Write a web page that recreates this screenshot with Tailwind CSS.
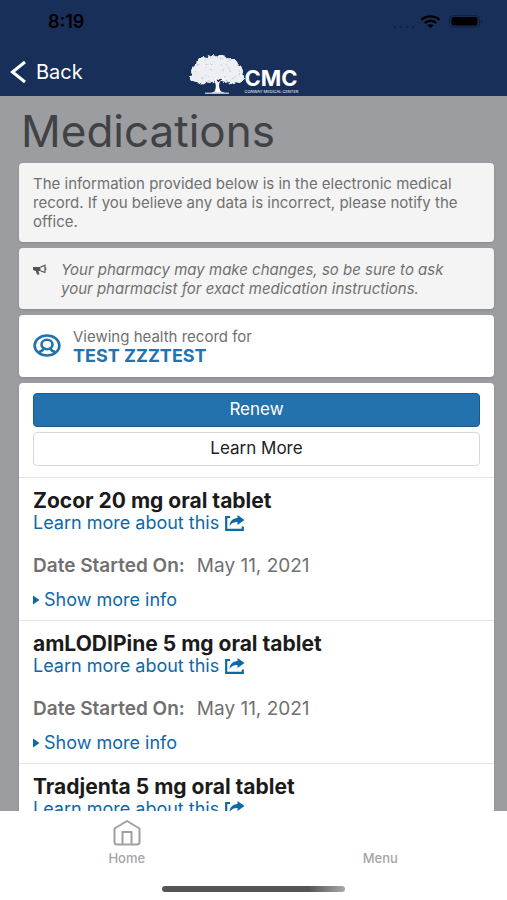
<!DOCTYPE html>
<html lang="en">
<head>
<meta charset="utf-8">
<meta name="viewport" content="width=device-width, initial-scale=1">
<title>Medications</title>
<script src="https://cdn.jsdelivr.net/npm/@tailwindcss/browser@4"></script>
</head>
<body class="flex h-screen flex-col overflow-hidden bg-[#9c9da1] font-['Inter','Liberation_Sans',sans-serif] text-[#707070]">
<svg class="absolute h-0 w-0" aria-hidden="true">
  <symbol id="share" viewBox="0 0 20 16"><path d="M5 2H1.200v12.800h16.600V11.500" fill="none" stroke="currentColor" stroke-width="2.200"/><path d="M12.500 0 19.500 5l-7 5V7C9 6.800 6.500 8 4.500 11 4.800 6 8 3.200 12.500 3z" fill="currentColor"/></symbol>
  <filter id="leaves" x="-10%" y="-10%" width="120%" height="120%">
    <feTurbulence type="fractalNoise" baseFrequency=".3" numOctaves="2" seed="4" result="n"/>
    <feDisplacementMap in="SourceGraphic" in2="n" scale="4" xChannelSelector="R" yChannelSelector="G"/>
  </filter>
</svg>

<header class="h-24 shrink-0 bg-[#182f59]">
  <div class="flex h-11 items-center justify-between pr-6 pl-12 text-black">
    <time class="text-lg font-semibold">8:19</time>
    <div class="flex items-center gap-1.5">
      <svg class="h-5 w-[52px]" viewBox="0 0 52 20" aria-label="Wi-Fi" role="img">
        <g fill="#10234a"><circle cx="4" cy="15" r="1.300"/><circle cx="10" cy="15" r="1.300"/><circle cx="16" cy="15" r="1.300"/><circle cx="22" cy="15" r="1.300"/></g>
        <g transform="translate(-3 0)"><g fill="none" stroke="#000" stroke-width="2.300"><path d="M33.500 7.800c5-4.600 13-4.600 18 0"/><path d="M36.700 11c3.300-3 8.300-3 11.600 0"/></g>
        <path d="M39.300 13.300c1.800-1.400 4.600-1.400 6.400 0L42.500 16z"/></g>
      </svg>
      <svg class="h-5 w-[34px]" viewBox="0 0 34 20" aria-label="Battery full" role="img">
        <rect x=".5" y="3.500" width="30" height="11.500" rx="3.500" fill="none" stroke="#0f1f3e"/><rect x="2.500" y="5" width="26" height="8.500" rx="2"/><path d="M32 7.500c1.500.8 1.500 3.200 0 4z" fill="#0f1f3e"/>
      </svg>
    </div>
  </div>
  <div class="grid grid-cols-[1fr_auto_1fr] items-center pt-1">
    <button type="button" class="flex items-center gap-2.5 pl-2.5 text-xl text-white">
      <svg class="h-6 w-4" viewBox="0 0 16 24" fill="none" stroke="currentColor" stroke-width="3" aria-hidden="true"><path d="M15 2 2.500 12 15 22"/></svg>
      Back
    </button>
    <div class="flex h-12 items-center pt-1 pr-5">
      <svg class="h-10 w-14" viewBox="0 0 56 40" aria-hidden="true">
        <g filter="url(#leaves)">
          <g fill="#edeff3">
            <circle cx="9" cy="17" r="7"/><circle cx="6" cy="24" r="5"/><circle cx="14" cy="10" r="7"/><circle cx="23" cy="7.500" r="6.500"/><circle cx="32" cy="7.500" r="6.500"/><circle cx="42" cy="11" r="7"/><circle cx="47" cy="17" r="7"/><circle cx="50" cy="24" r="5"/><circle cx="13" cy="25" r="5.500"/><circle cx="43" cy="25" r="5.500"/><ellipse cx="28" cy="16" rx="20" ry="11"/><circle cx="21" cy="24" r="5"/><circle cx="36" cy="23" r="5"/>
          </g>
          <g fill="none" stroke="#bcc3d0" stroke-width=".9" stroke-dasharray="2 5 3 7">
            <ellipse cx="28" cy="16" rx="22" ry="12"/><ellipse cx="28" cy="17" rx="13" ry="7"/><path d="M5 20l12 7M51 20l-11 7M17 9l6 9M39 9l-6 9"/>
          </g>
        </g>
        <path d="M20 23.500l6 4.500-.5-4.500h1.500l1.200 3.500 2.800-3 5.500.5-5 2.500c-2 2-2 7 .5 10.500l4 1.200H22l3.500-1.200c1.800-3 1.700-7.500.2-9.500z" fill="#fff"/>
        <path d="M27.500 25.500l1.500 3 4.500-3.500-2.500-.3-1.500 1.300z" fill="#182f59"/>
        <path d="M16 39.200h24" stroke="#fff" stroke-width="1"/>
      </svg>
      <div class="flex flex-col pt-3 text-white">
        <span class="text-[22px] leading-6 font-bold">CMC</span>
        <span class="text-[4px] leading-[4px] whitespace-nowrap">CONWAY MEDICAL CENTER</span>
      </div>
    </div>
  </div>
</header>

<main class="min-h-0 flex-1 overflow-hidden pr-[7px] pl-[13px]">
  <h1 class="px-2 pt-2 text-[44px] leading-[54px] text-[#414244]">Medications</h1>
  <div class="mt-[5px] flex flex-col gap-1.5 px-1.5">
    <p class="rounded-sm bg-[#f4f4f4] px-3.5 py-[11px] text-[15px] leading-[19px] shadow">The information provided below is in the electronic medical record. If you believe any data is incorrect, please notify the office.</p>
    <div class="flex gap-3 rounded-sm bg-[#f4f4f4] pt-3 pb-[11px] pr-5 pl-3.5 shadow">
      <svg class="mt-1 h-3 w-4 shrink-0" viewBox="0 0 16 12" aria-hidden="true"><path d="M0 3h7.500v4H5.500l1 3.500H4L2.800 7 0 6z" fill="#555"/><path d="M7.500 3.200 12 1.300v7L7.500 6.800M12.700 3.500v2.500" fill="none" stroke="#666" stroke-width="1.300"/></svg>
      <p class="text-[15px] leading-[19px] italic">Your pharmacy may make changes, so be sure to ask your pharmacist for exact medication instructions.</p>
    </div>
    <section class="flex items-center gap-3 rounded-sm bg-white px-3.5 py-3 shadow">
      <svg class="h-6 w-7" viewBox="0 0 28 24" fill="none" stroke="#2372ae" aria-hidden="true"><ellipse cx="14" cy="11.500" rx="12.400" ry="10" stroke-width="2.600"/><ellipse cx="14" cy="10.500" rx="5.500" ry="4.700" stroke-width="2.600"/><path d="M11 14c-.8 2-2.500 3.300-5 4M17 14c.8 2 2.500 3.300 5 4" stroke-width="2.500"/></svg>
      <div><p class="text-[15px] leading-[19px]">Viewing health record for</p><p class="text-lg leading-[19px] font-bold text-[#2372ae]">TEST ZZZTEST</p></div>
    </section>
    <section class="rounded-sm bg-white shadow">
      <div class="flex flex-col gap-[5px] px-3.5 pt-2.5 pb-[11px]">
        <button type="button" class="h-[34px] rounded border border-[#195a8d] bg-[#2372ae] text-[17px] text-white">Renew</button>
        <button type="button" class="h-[34px] rounded border border-[#d8d8d8] bg-white text-[17px] text-[#222]">Learn More</button>
      </div>
      <article class="h-[143px] border-t border-[#e4e4e4] px-3.5 pt-3">
        <h2 class="text-[21px] leading-[22px] font-bold text-[#1b1b1b]">Zocor 20 mg oral tablet</h2>
        <a href="#zocor" class="flex items-center gap-1.5 text-lg leading-[22px] text-[#0d68a8]">Learn more about this <svg class="h-4 w-5" aria-hidden="true"><use href="#share"/></svg></a>
        <dl class="mt-5 flex gap-3 text-[19px] leading-6"><dt class="font-semibold">Date Started On:</dt><dd>May 11, 2021</dd></dl>
        <button type="button" class="mt-[11px] flex items-center gap-1 text-lg leading-[22px] text-[#0d68a8]"><svg class="h-3 w-[7px]" viewBox="0 0 7 12" fill="currentColor" aria-hidden="true"><path d="M0 1.500 6.500 6 0 10.500z"/></svg>Show more info</button>
      </article>
      <article class="h-[143px] border-t border-[#e4e4e4] px-3.5 pt-3">
        <h2 class="text-[21px] leading-[22px] font-bold text-[#1b1b1b]">amLODIPine 5 mg oral tablet</h2>
        <a href="#amlodipine" class="flex items-center gap-1.5 text-lg leading-[22px] text-[#0d68a8]">Learn more about this <svg class="h-4 w-5" aria-hidden="true"><use href="#share"/></svg></a>
        <dl class="mt-5 flex gap-3 text-[19px] leading-6"><dt class="font-semibold">Date Started On:</dt><dd>May 11, 2021</dd></dl>
        <button type="button" class="mt-[11px] flex items-center gap-1 text-lg leading-[22px] text-[#0d68a8]"><svg class="h-3 w-[7px]" viewBox="0 0 7 12" fill="currentColor" aria-hidden="true"><path d="M0 1.500 6.500 6 0 10.500z"/></svg>Show more info</button>
      </article>
      <article class="border-t border-[#e4e4e4] px-3.5 pt-3">
        <h2 class="text-[21px] leading-[22px] font-bold text-[#1b1b1b]">Tradjenta 5 mg oral tablet</h2>
        <a href="#tradjenta" class="flex items-center gap-1.5 text-lg leading-[22px] text-[#0d68a8]">Learn more about this <svg class="h-4 w-5" aria-hidden="true"><use href="#share"/></svg></a>
      </article>
    </section>
  </div>
</main>

<footer class="flex shrink-0 flex-col items-center bg-white pb-2">
  <nav class="grid w-full grid-cols-2 pt-2 text-[13px] leading-4 font-medium text-[#a5a5a5]">
    <a href="#home" class="flex flex-col items-center gap-[3px]">
      <svg class="h-7 w-7" viewBox="0 0 28 28" fill="none" stroke="#a0a0a0" stroke-width="2" stroke-linejoin="round" aria-hidden="true"><path d="M1.500 9.500 14 2l12.500 7.500V23q0 2.500-2.500 2.500H4Q1.500 25.500 1.500 23zM9.500 25.500V13h9v12.500"/></svg>
      Home
    </a>
    <a href="#menu" class="flex flex-col items-center justify-end">Menu</a>
  </nav>
  <div class="mt-5 h-1.5 w-[36%] rounded-full bg-linear-to-r from-[#555] from-80% to-[#aaa]"></div>
</footer>
</body>
</html>
